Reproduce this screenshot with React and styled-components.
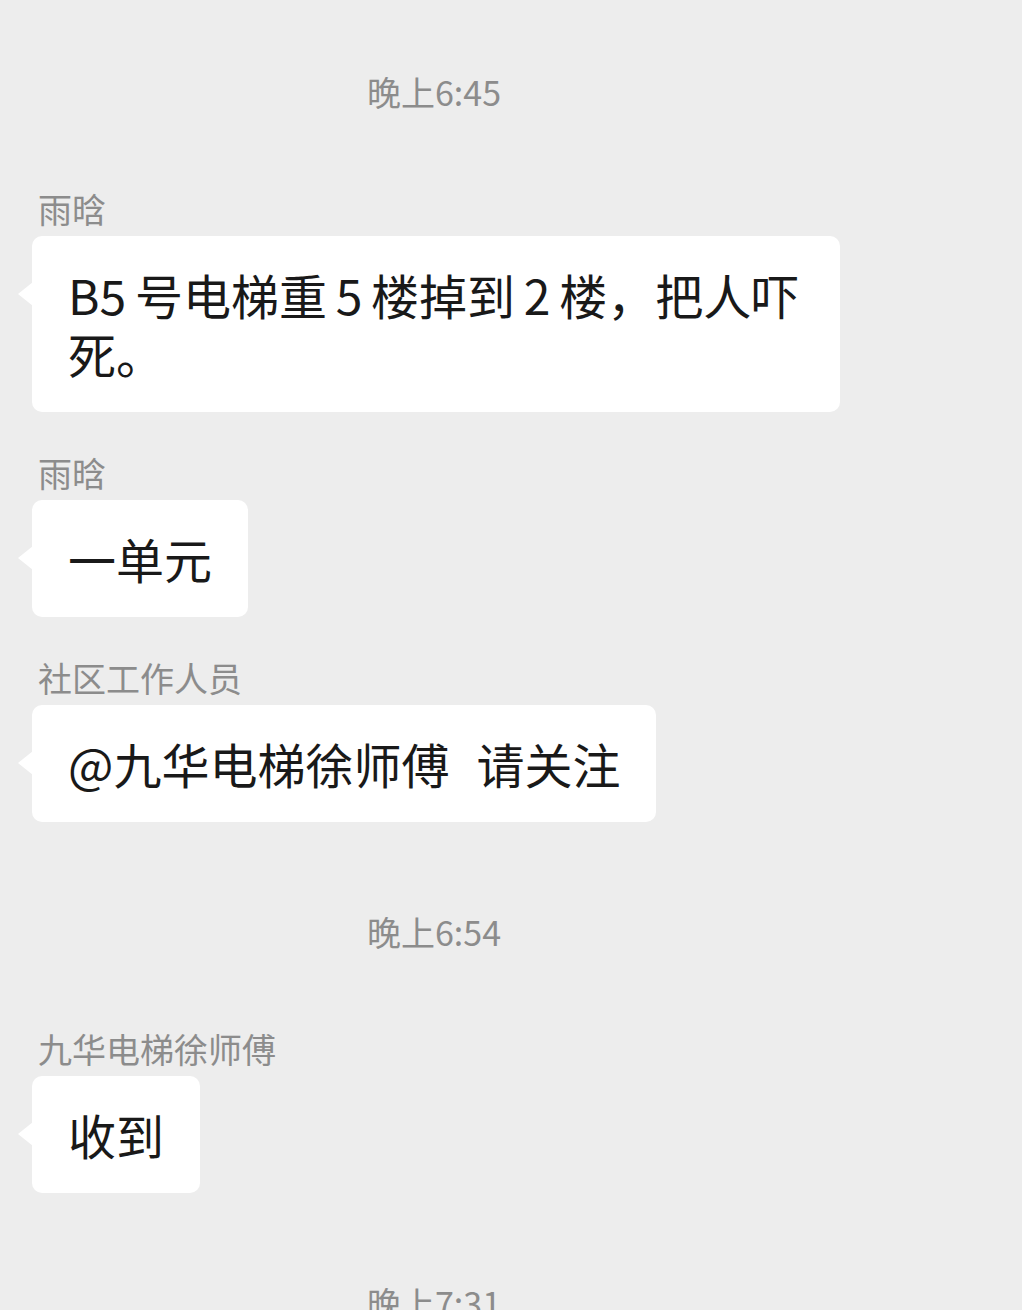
import React from 'react';
import styled, { createGlobalStyle } from 'styled-components';

const messages = [
  { type: 'time', text: '晚上6:45' },
  { type: 'msg', name: '雨晗', text: 'B5 号电梯重 5 楼掉到 2 楼，把人吓死。' },
  { type: 'msg', name: '雨晗', text: '一单元' },
  { type: 'msg', name: '社区工作人员', text: '@九华电梯徐师傅\u2002\u200A请关注' },
  { type: 'time', text: '晚上6:54' },
  { type: 'msg', name: '九华电梯徐师傅', text: '收到' },
  { type: 'time', text: '晚上7:31' },
];

const App = () => {
  return (
    <>
      <GlobalStyle />
      <ChatPage>
        {messages.map((m, i) =>
          m.type === 'time' ? (
            <TimeStamp key={i} $first={i === 0}>
              {m.text}
            </TimeStamp>
          ) : (
            <MessageGroup key={i}>
              <SenderName>{m.name}</SenderName>
              <Bubble>{m.text}</Bubble>
            </MessageGroup>
          )
        )}
      </ChatPage>
    </>
  );
};

export default App;

// STYLING
const GlobalStyle = createGlobalStyle`
  html, body {
    margin: 0;
    padding: 0;
    overflow: hidden;
    background: #ededed;
  }
  body {
    font-family: "Noto Sans CJK SC", "Noto Sans", sans-serif;
  }
`;

const ChatPage = styled.div`
  width: 1022px;
  height: 1310px;
  overflow: hidden;
  padding-top: 70px;
  box-sizing: border-box;
  display: flex;
  flex-direction: column;
  align-items: flex-start;
  background: #ededed;
`;

const TimeStamp = styled.div`
  flex-shrink: 0;
  width: 868px;
  margin: ${(p) => (p.$first ? 0 : 88)}px 0 73px;
  text-align: center;
  font-size: 34px;
  line-height: 44px;
  color: #8c8c8c;
`;

const MessageGroup = styled.div`
  flex-shrink: 0;
  display: flex;
  flex-direction: column;
  align-items: flex-start;
  gap: 5px;

  & + & {
    margin-top: 39px;
  }
`;

const SenderName = styled.div`
  padding-left: 38px;
  font-size: 34px;
  line-height: 44px;
  color: #8c8c8c;
`;

const Bubble = styled.div`
  position: relative;
  margin-left: 32px;
  max-width: 808px;
  box-sizing: border-box;
  padding: 29px 36px;
  background: #ffffff;
  border-radius: 10px;
  font-size: 48px;
  line-height: 59px;
  word-spacing: -2px;
  color: #191919;
  white-space: pre-wrap;

  &::before {
    content: '';
    position: absolute;
    left: -14px;
    top: 46px;
    border-style: solid;
    border-width: 12px 15px 12px 0;
    border-color: transparent #ffffff transparent transparent;
  }
`;
